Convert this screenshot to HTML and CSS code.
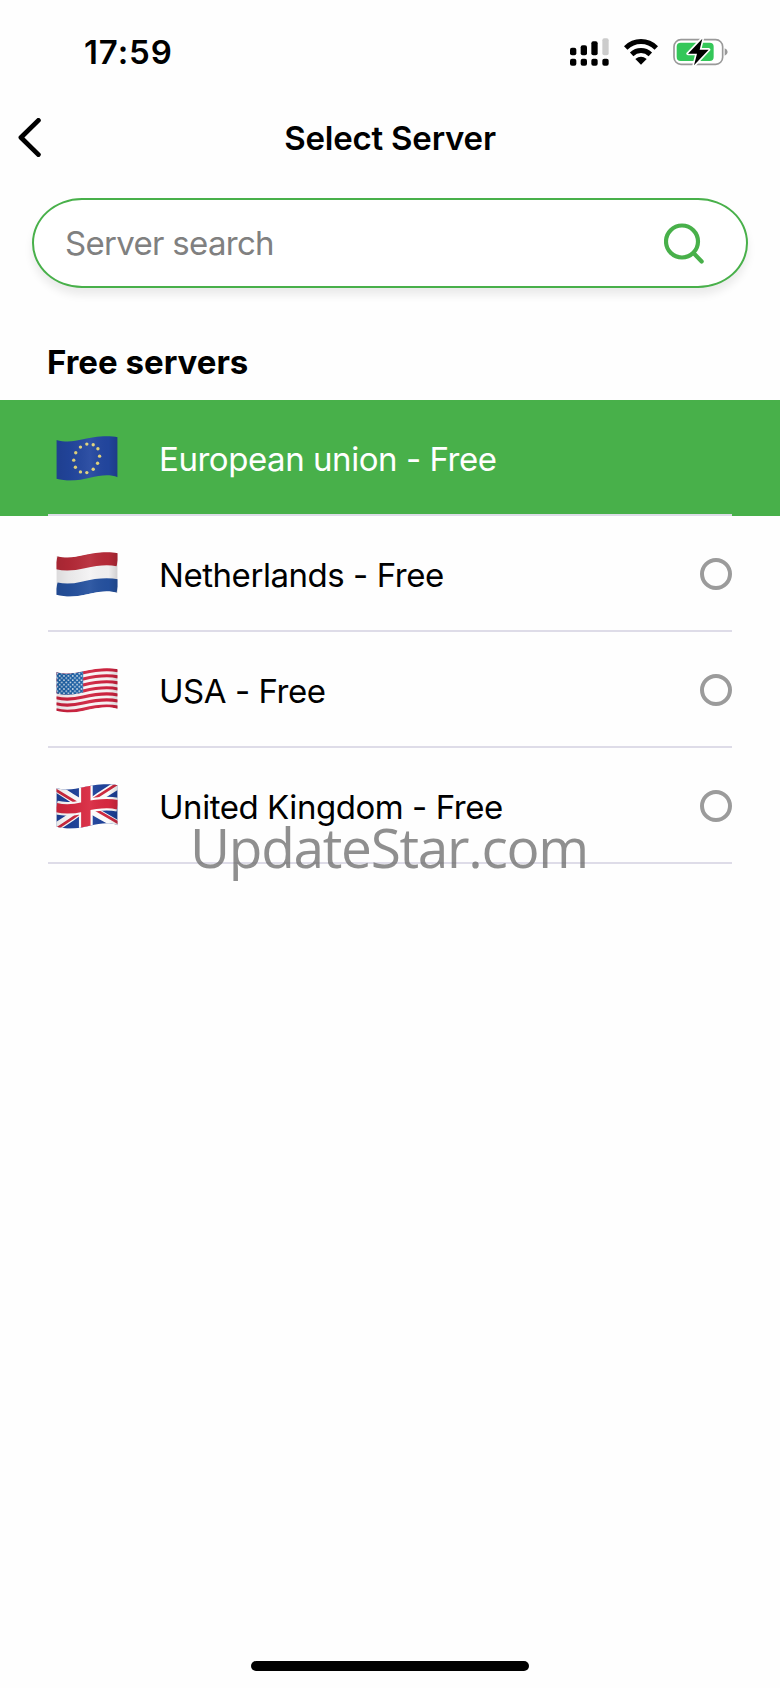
FILE: index.html
```html
<!DOCTYPE html>
<html lang="en">
<head>
<meta charset="utf-8">
<title>Select Server</title>
<link rel="stylesheet" href="styles.css">
</head>
<body>
<main class="screen">
  <header class="status">
    <span class="time">17:59</span>
    <div class="status-icons">
      <svg class="signal" viewBox="0 0 117 84">
        <g fill="#000"><rect x="0" y="29" width="19" height="23" rx="6"/><rect x="32" y="22" width="19" height="30" rx="6"/><rect x="64" y="10" width="19" height="42" rx="6"/><rect x="0" y="62" width="19" height="21" rx="6"/><rect x="32" y="62" width="19" height="21" rx="6"/><rect x="64" y="62" width="19" height="21" rx="6"/><rect x="97" y="62" width="19" height="21" rx="6"/></g>
        <rect x="97" y="1" width="19" height="51" rx="6" fill="#ccc"/>
      </svg>
      <svg class="wifi" viewBox="0 0 102 78">
        <g fill="none" stroke="#000" stroke-width="15"><path d="M5 27C31 1 71 1 97 27"/><path d="M23 46C39 31 63 31 79 46"/></g>
        <path d="M51 77 34 60Q51 46 68 60Z"/>
      </svg>
      <svg class="battery" viewBox="0 0 165 84">
        <rect x="3" y="5" width="146" height="74" rx="21" fill="#fff" stroke="#999" stroke-width="5"/>
        <path d="M155 31Q164 35 164 42T155 53Z" fill="#999"/>
        <rect x="11" y="14" width="111" height="55" rx="12" fill="#34c759"/>
        <path d="M88 2 45 47H72L63 82 107 35H80Z" fill="#000" stroke="#fff" stroke-width="10" stroke-linejoin="round" paint-order="stroke"/>
      </svg>
    </div>
  </header>

  <nav class="nav">
    <svg class="back" viewBox="0 0 66 114"><path d="M59 7 8 57 59 107" fill="none" stroke="#000" stroke-width="14" stroke-linecap="round" stroke-linejoin="round"/></svg>
    <h1 class="title">Select Server</h1>
  </nav>

  <div class="search">
    <span class="placeholder">Server search</span>
    <svg class="search-icon" viewBox="0 0 120 122"><g fill="none" stroke="#48b04a" stroke-width="12.5" stroke-linecap="round"><circle cx="54" cy="55" r="48"/><path d="M90 91 113 115"/></g></svg>
  </div>

  <h2 class="section">Free servers</h2>

  <ul class="list">
    <li class="row selected">
      <svg class="flag" viewBox="0 0 183 134">
        <defs>
          <clipPath id="cloth"><path d="M0 12C30 20 55 16 80 10S150-4 183 4V123C160 113 130 117 100 124S40 137 0 127Z"/></clipPath>
          <linearGradient id="shade"><stop offset="0" stop-color="#000" stop-opacity=".1"/><stop offset=".2" stop-color="#000" stop-opacity=".05"/><stop offset=".55" stop-color="#fff" stop-opacity=".06"/><stop offset=".85" stop-color="#000" stop-opacity=".02"/><stop offset="1" stop-color="#000" stop-opacity=".15"/></linearGradient>
        </defs>
        <g clip-path="url(#cloth)">
          <rect width="183" height="134" fill="#22469f"/>
          <g fill="#e3d47a"><circle cx="91" cy="24" r="5"/><circle cx="110" cy="26" r="5"/><circle cx="124" cy="38" r="5"/><circle cx="129" cy="60" r="5"/><circle cx="123" cy="81" r="5"/><circle cx="110" cy="99" r="5"/><circle cx="91" cy="109" r="5"/><circle cx="72" cy="107" r="5"/><circle cx="57" cy="93" r="5"/><circle cx="52" cy="72" r="5"/><circle cx="58" cy="50" r="5"/><circle cx="72" cy="33" r="5"/></g>
          <rect width="183" height="134" fill="url(#shade)"/>
        </g>
      </svg>
      <div class="cell"><span class="name">European union - Free</span></div>
    </li>
    <li class="row">
      <svg class="flag" viewBox="0 0 183 134">
        <g clip-path="url(#cloth)">
          <rect width="183" height="134" fill="#f4f3f4"/>
          <g fill="none" stroke-width="40"><path d="M-1 31C30 39 55 35 80 29S150 15 184 23" stroke="#b72a38"/><path d="M-1 110C30 118 55 114 80 108S150 94 184 102" stroke="#25519f"/></g>
          <rect width="183" height="134" fill="url(#shade)"/>
        </g>
      </svg>
      <div class="cell"><span class="name">Netherlands - Free</span><span class="radio"></span></div>
    </li>
    <li class="row">
      <svg class="flag" viewBox="0 0 183 134">
        <defs>
          <pattern id="stars" width="13" height="13" patternUnits="userSpaceOnUse"><circle cx="3.5" cy="4" r="2.6" fill="#e2edf7"/><circle cx="10" cy="10.5" r="2.6" fill="#e2edf7"/></pattern>
          <path id="stripe" d="M-1 12C30 20 55 16 80 10S150-4 184 4"/>
        </defs>
        <g clip-path="url(#cloth)">
          <rect width="183" height="134" fill="#fbf5f7"/>
          <g fill="none" stroke="#cf2340" stroke-width="9.2">
            <use href="#stripe" y="4.5"/><use href="#stripe" y="22.5"/><use href="#stripe" y="40.5"/><use href="#stripe" y="58.5"/><use href="#stripe" y="76.5"/><use href="#stripe" y="94.5"/><use href="#stripe" y="112.5"/>
          </g>
          <path d="M0 12C30 20 55 16 80 10V73C55 79 30 83 0 75Z" fill="#1d62a8"/>
          <path d="M0 12C30 20 55 16 80 10V73C55 79 30 83 0 75Z" fill="url(#stars)"/>
          <rect width="183" height="134" fill="url(#shade)"/>
        </g>
      </svg>
      <div class="cell"><span class="name">USA - Free</span><span class="radio"></span></div>
    </li>
    <li class="row">
      <svg class="flag" viewBox="0 0 183 134">
        <g clip-path="url(#cloth)">
          <rect width="183" height="134" fill="#1e429b"/>
          <g fill="none">
            <path d="M-4 9Q40 39 88 67T187 123M-4 130Q40 104 88 67T187 1" stroke="#fff" stroke-width="25"/>
            <path d="M-8 14Q38 42 84 70M92 62 187 117M-4 136Q40 108 88 74M84 62 187-4" stroke="#d02a40" stroke-width="8"/>
            <path d="M-1 70C30 78 55 74 80 68S150 54 184 62M88-2V136" stroke="#fff" stroke-width="41"/>
            <path d="M-1 70C30 78 55 74 80 68S150 54 184 62M88-2V136" stroke="#d92840" stroke-width="28"/>
          </g>
          <rect width="183" height="134" fill="url(#shade)"/>
        </g>
      </svg>
      <div class="cell"><span class="name">United Kingdom - Free</span><span class="radio"></span></div>
    </li>
  </ul>

  <div class="watermark">UpdateStar.com</div>
  <div class="home"></div>
</main>
</body>
</html>
```
FILE: styles.css
```css
* { box-sizing: border-box; }
body { margin: 0; background: #fefefe; }
.screen {
  position: relative;
  width: 780px;
  height: 1688px;
  display: flex;
  flex-direction: column;
  background: #fefefe;
  color: #000;
  font-family: Inter, "Liberation Sans", sans-serif;
  font-size: 33px;
  line-height: 40px;
  white-space: nowrap;
}
svg { display: block; flex: none; }
.status {
  height: 104px;
  padding: 0 52px 0 84px;
  display: flex;
  justify-content: space-between;
}
.time { margin-top: 32px; font-weight: 600; letter-spacing: 0.9px; }
.status-icons { display: flex; align-items: flex-start; gap: 15px; padding-top: 38px; }
.signal { width: 39px; height: 28px; }
.wifi { width: 34px; height: 26px; margin-top: 1px; }
.battery { width: 55px; height: 28px; }
.nav { height: 94px; position: relative; display: flex; justify-content: center; }
.back { position: absolute; left: 18px; top: 14px; width: 23px; height: 39px; }
.title { margin: 14px 0 0; font-size: 33px; font-weight: 600; letter-spacing: -0.2px; }
.search {
  height: 90px;
  margin: 0 32px;
  padding: 0 42px 0 31px;
  border: 2px solid #48b04a;
  border-radius: 50px / 45px;
  display: flex;
  align-items: center;
  justify-content: space-between;
  background: #fff;
  box-shadow: 0 7px 9px rgba(0, 0, 0, .08);
}
.placeholder { color: #808080; letter-spacing: -0.7px; }
.search-icon { width: 40px; height: 41px; }
.section { margin: 54px 0 0 47px; height: 58px; font-size: 33px; font-weight: 700; letter-spacing: 0; }
.list { margin: 0; padding: 0; list-style: none; }
.row { position: relative; height: 116px; padding: 36px 48px 0 55.5px; display: flex; align-items: flex-start; gap: 41.5px; }
.row::after { content: ""; position: absolute; left: 48px; right: 48px; bottom: 0; height: 2px; background: #dedce8; }
.selected { background: #48b04a; color: #fff; }
.flag { width: 62px; height: 45px; }
.cell { flex: 1; height: 44px; display: flex; align-items: center; justify-content: space-between; }
.name { padding-top: 1px; letter-spacing: -0.45px; }
.radio { width: 32px; height: 32px; border: 4px solid #9b9b9b; border-radius: 50%; }
.watermark {
  position: absolute;
  left: 190px;
  top: 809px;
  font-family: "Open Sans", "Noto Sans", sans-serif;
  font-size: 55px;
  line-height: 76px;
  letter-spacing: -1.3px;
  color: rgba(112, 112, 112, .78);
}
.home { width: 278px; height: 10px; margin: auto auto 17px; border-radius: 5px; background: #000; }
```
